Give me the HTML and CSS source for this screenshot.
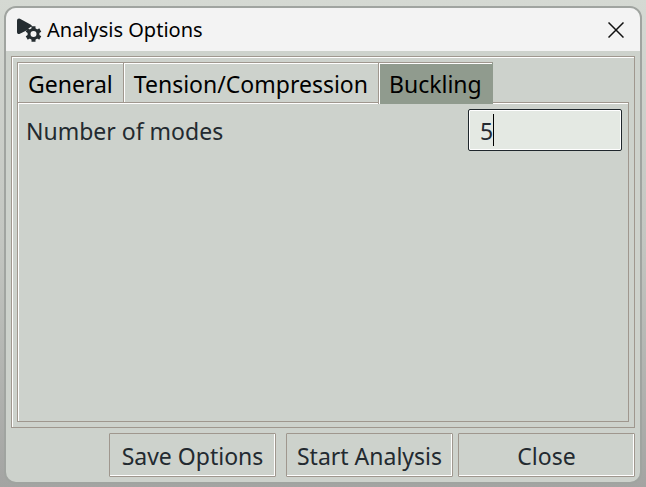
FILE: index.html
```html
<!DOCTYPE html>
<html lang="en">
<head>
    <meta charset="UTF-8">
    <meta name="viewport" content="width=device-width, initial-scale=1.0">
    <title>Analysis Options</title>
    <link rel="stylesheet" href="styles.css">
</head>
<body>
    <div class="window">
        <header class="titlebar">
            <svg class="app-icon" width="26" height="26" viewBox="0 0 26 26" aria-hidden="true">
                <path d="M3 3.500 L14 9.500 L3 15 Z" fill="#252d31" stroke="#252d31" stroke-width="4" stroke-linejoin="round"/>
                <circle cx="17.500" cy="17" r="7.500" fill="#f3f3f3"/>
                <circle cx="17.500" cy="17" r="4.500" fill="none" stroke="#252d31" stroke-width="3"/>
                <g stroke="#252d31" stroke-width="4">
                    <path d="M17.500 9.200v3.200M17.500 21.600v3.200"/>
                    <path d="M17.500 9.200v3.200M17.500 21.600v3.200" transform="rotate(60 17.500 17)"/>
                    <path d="M17.500 9.200v3.200M17.500 21.600v3.200" transform="rotate(120 17.500 17)"/>
                </g>
            </svg>
            <h1>Analysis Options</h1>
            <button class="close" type="button" aria-label="Close window">
                <svg width="16" height="16" viewBox="0 0 16 16">
                    <path d="M.5 .5l15 15M15.500 .5l-15 15" fill="none" stroke="#111" stroke-width="1.500"/>
                </svg>
            </button>
        </header>

        <main class="content">
            <div class="frame">
                <div class="tabs" role="tablist">
                    <button class="tab" type="button" role="tab">General</button>
                    <button class="tab" type="button" role="tab">Tension/Compression</button>
                    <button class="tab selected" type="button" role="tab" aria-selected="true">Buckling</button>
                </div>
                <div class="panel" role="tabpanel">
                    <label for="modes">Number of modes</label>
                    <div class="entry">
                        <input type="text" id="modes" value="5">
                        <span class="caret"></span>
                    </div>
                </div>
            </div>

            <div class="buttons">
                <button class="button save" type="button">Save Options</button>
                <button class="button" type="button">Start Analysis</button>
                <button class="button" type="button">Close</button>
            </div>
        </main>
    </div>
</body>
</html>
```

FILE: styles.css
```css
* {
    box-sizing: border-box;
}
body {
    margin: 0;
    height: 100vh;
    padding: 6px 4px 3px;
    display: flex;
    background: linear-gradient(#d5d9d3, #c3c6c1 50%, #a3a4a2);
    font-family: "Noto Sans", "Open Sans", sans-serif;
    font-size: 23px;
    line-height: 32px;
    color: #232a30;
}
.window {
    flex: 1;
    display: flex;
    flex-direction: column;
    overflow: hidden;
    border: 2px solid #a0a4a0;
    border-radius: 12px;
    background: #cdd2cc;
}
.titlebar {
    height: 43px;
    padding: 0 16px 0 10px;
    display: flex;
    align-items: center;
    background: #f3f3f3;
    color: #000;
}
.titlebar h1 {
    flex: 1;
    margin: 0 0 0 5px;
    font-size: 20px;
    font-weight: 400;
}
.close {
    display: flex;
    padding: 0;
    border: none;
    background: none;
}
.content {
    flex: 1;
    display: flex;
    flex-direction: column;
    padding: 5px;
}
.frame {
    flex: 1;
    display: flex;
    flex-direction: column;
    padding: 5px;
    border: 1px solid #9f978e;
    box-shadow: inset 1px 1px #fff;
}
.tabs {
    display: flex;
}
.tab {
    height: 40px;
    margin: 0 0 0 -1px;
    padding: 3px 10px 0;
    border: 1px solid #9f978e;
    border-bottom: none;
    background: #cdd2cc;
    box-shadow: inset 1px 1px #fff;
    font: inherit;
    color: #000;
}
.tab:first-child {
    margin-left: 0;
}
.tab.selected {
    position: relative;
    height: 42px;
    margin-bottom: -2px;
    padding-bottom: 2px;
    border-right-color: #909b8e;
    background: #909b8e;
}
.panel {
    flex: 1;
    display: flex;
    align-items: flex-start;
    justify-content: space-between;
    padding: 6px 6px 6px 8px;
    border: 1px solid #9f978e;
    box-shadow: inset 1px 1px #fff;
}
.panel label {
    padding-top: 6px;
}
.entry {
    position: relative;
    width: 154px;
}
.entry input {
    display: block;
    width: 100%;
    height: 42px;
    padding: 2px 11px 0;
    border: 1px solid #1f272c;
    border-radius: 2px;
    outline: none;
    background: #e4e9e3;
    box-shadow: inset 0 0 0 1px #fff;
    font: inherit;
    color: inherit;
}
.caret {
    position: absolute;
    top: 5px;
    left: 25px;
    width: 1px;
    height: 32px;
    background: #000;
}
.buttons {
    display: flex;
    justify-content: flex-end;
    gap: 5px;
    margin-top: 5px;
}
.button {
    width: 177px;
    height: 44px;
    padding: 2px 0 0;
    border: 1px solid #9f978e;
    border-radius: 1px;
    background: #cdd2cc;
    box-shadow: inset -1px -1px #fff;
    font: inherit;
    color: inherit;
}
.button:not(:last-child) {
    width: 167px;
}
.save {
    margin-right: 5px;
}
```
